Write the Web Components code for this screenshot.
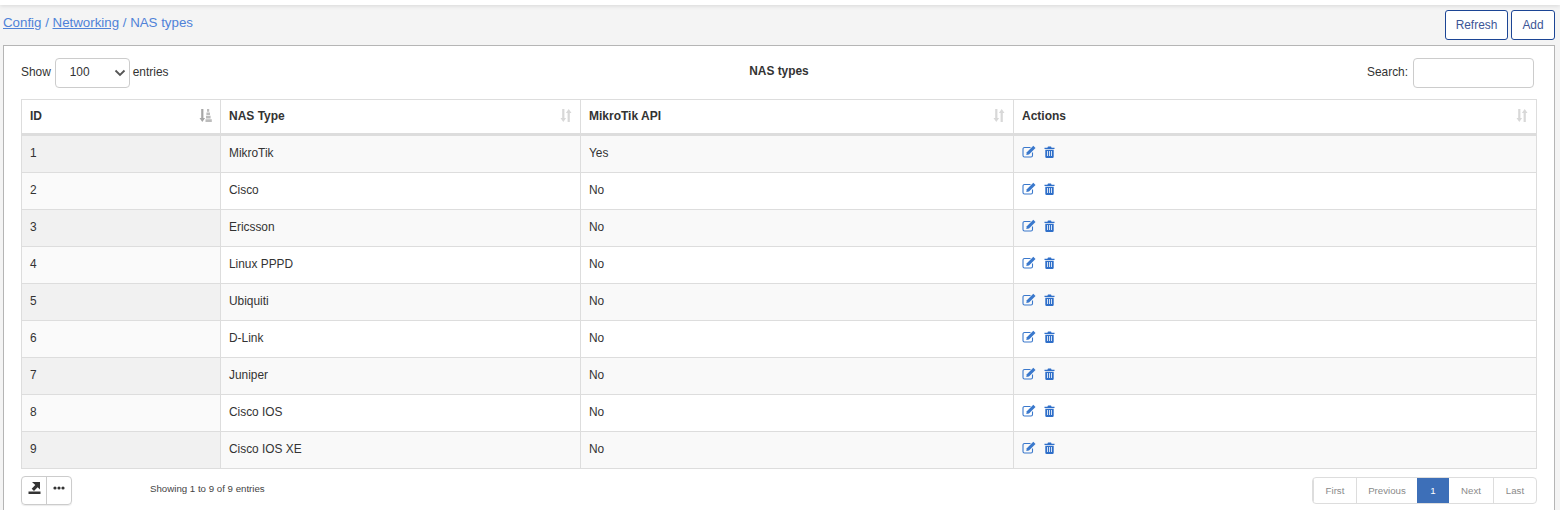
<!DOCTYPE html>
<html>
<head>
<meta charset="utf-8">
<title>NAS types</title>
<style>
  html, body { margin: 0; height: 510px; overflow: hidden; background: #f4f4f4; }
  body { font-family: "Liberation Sans", Arial, sans-serif; font-size: 11.9px; color: #333; }
</style>
</head>
<body>
<page-top>
  <nav-crumbs slot="crumbs"></nav-crumbs>
  <top-button slot="buttons" style="--w: 63px">Refresh</top-button>
  <top-button slot="buttons" style="--w: 44px">Add</top-button>
</page-top>
<nas-panel></nas-panel>

<script>
class PageTop extends HTMLElement {
  connectedCallback() {
    this.attachShadow({ mode: 'open' });
    this.shadowRoot.innerHTML = `
      <style>
        :host { display: block; }
        .strip { height: 5px; background: #fff; box-shadow: 0 1px 4px rgba(0,0,0,.12); }
        .row { display: flex; justify-content: space-between; align-items: flex-start; height: 40px; padding: 5px 5px 0 3px; box-sizing: border-box; }
        .btns { display: flex; gap: 3px; }
      </style>
      <div class="strip"></div>
      <div class="row">
        <slot name="crumbs"></slot>
        <div class="btns"><slot name="buttons"></slot></div>
      </div>
    `;
  }
}

class NavCrumbs extends HTMLElement {
  connectedCallback() {
    this.attachShadow({ mode: 'open' });
    this.shadowRoot.innerHTML = `
      <style>
        :host { display: block; font-size: 13.3px; line-height: 16px; color: #4f82d8; padding-top: 5px; }
        a { color: #4f82d8; text-decoration: underline; }
      </style>
      <a href="#">Config</a> / <a href="#">Networking</a> / NAS types
    `;
  }
}

class TopButton extends HTMLElement {
  connectedCallback() {
    this.attachShadow({ mode: 'open' });
    this.shadowRoot.innerHTML = `
      <style>
        :host { display: block; }
        button { display: block; width: var(--w); height: 30px; padding: 0; font: 11.9px "Liberation Sans", Arial, sans-serif; color: #3c5596; background: #fff; border: 1px solid #1c4595; border-radius: 3px; }
      </style>
      <button><slot></slot></button>
    `;
  }
}

const editIcon = `<svg width="14" height="13" viewBox="0 0 14 13"><path d="M10.500 7.500v3a1.500 1.500 0 0 1-1.500 1.500H2.500A1.500 1.500 0 0 1 1 10.500V4a1.500 1.500 0 0 1 1.500-1.500h6" fill="none" stroke="#3a78cc" stroke-width="1.100"/><path d="M4.800 7.200l6.500-6.500 2.200 2.200L7 9.400l-2.700.5z" fill="#3a78cc"/></svg>`;
const trashIcon = `<svg width="11" height="12" viewBox="0 0 11 12"><path d="M4 0.500h3l.6 1.200H10.500v1.300H.5V1.700h2.900zM1.300 3.700h8.400v7a1.200 1.200 0 0 1-1.200 1.200h-6a1.200 1.200 0 0 1-1.200-1.200z" fill="#2f6fc9"/><path d="M3.500 5v5M5.500 5v5M7.500 5v5" stroke="#fff" stroke-width=".8"/></svg>`;
const sortIcon = `<svg width="12" height="13" viewBox="0 0 12 13"><path d="M2.200 0h2.200v9h1.700L3.300 13 .5 9h1.700zM8.700 0l2.800 4H9.800v9H7.600V4H5.900z" fill="#d8d8d8"/></svg>`;
const sortAscIcon = `<svg width="13" height="13" viewBox="0 0 13 13"><path d="M2.200 0h2.200v9h1.700L3.300 13 .5 9h1.700z" fill="#a6a6a6"/><path d="M8 0h2.200v2.700H8zM7.400 3.400h3.600v2.700H7.400zM7 6.800h4.600v2.700H7zM6.500 10.200h6.300V13H6.500z" fill="#bcbcbc"/></svg>`;

class NasRow extends HTMLElement {
  connectedCallback() {
    const odd = this.getAttribute('n') % 2 == 1;
    this.attachShadow({ mode: 'open' });
    this.shadowRoot.innerHTML = `
      <style>
        :host { display: grid; grid-template-columns: 199px 360px 433px 1fr; height: 37px; box-sizing: border-box; border-bottom: 1px solid #ddd; background: ${odd ? '#f9f9f9' : '#fff'}; }
        div { display: flex; align-items: center; padding: 0 8px; border-left: 1px solid #ddd; line-height: 14px; padding-bottom: 3px; }
        div:last-child { border-right: 1px solid #ddd; gap: 8px; padding-bottom: 5px; }
        .id { background: ${odd ? '#f1f1f1' : '#fafafa'}; }
        svg { display: block; }
      </style>
      <div class="id">${this.getAttribute('n')}</div>
      <div>${this.getAttribute('type')}</div>
      <div>${this.getAttribute('api')}</div>
      <div>${editIcon}${trashIcon}</div>
    `;
  }
}

class NasTable extends HTMLElement {
  connectedCallback() {
    const rows = [
      ['MikroTik', 'Yes'], ['Cisco', 'No'], ['Ericsson', 'No'], ['Linux PPPD', 'No'], ['Ubiquiti', 'No'],
      ['D-Link', 'No'], ['Juniper', 'No'], ['Cisco IOS', 'No'], ['Cisco IOS XE', 'No']
    ];
    this.attachShadow({ mode: 'open' });
    this.shadowRoot.innerHTML = `
      <style>
        :host { display: block; }
        .head { display: grid; grid-template-columns: 199px 360px 433px 1fr; height: 37px; box-sizing: border-box; border-top: 1px solid #ddd; border-bottom: 3px solid #ddd; background: #fff; }
        .head div { display: flex; align-items: center; justify-content: space-between; padding: 0 8px 2px; border-left: 1px solid #ddd; font-weight: bold; font-size: 12px; }
        .head div:last-child { border-right: 1px solid #ddd; }
        svg { display: block; }
      </style>
      <div class="head">
        <div>ID ${sortAscIcon}</div>
        <div>NAS Type ${sortIcon}</div>
        <div>MikroTik API ${sortIcon}</div>
        <div>Actions ${sortIcon}</div>
      </div>
      ${rows.map((r, i) => `<nas-row n="${i + 1}" type="${r[0]}" api="${r[1]}"></nas-row>`).join('')}
    `;
  }
}

class PagerBar extends HTMLElement {
  connectedCallback() {
    this.attachShadow({ mode: 'open' });
    this.shadowRoot.innerHTML = `
      <style>
        :host { display: grid; grid-template-columns: 43px 61px 32px 44px 43px; font-size: 9.7px; color: #8a8a8a; background: #fff; border: 1px solid #ddd; border-radius: 4px; height: 25px; overflow: hidden; }
        span { display: flex; align-items: center; justify-content: center; border-left: 1px solid #ddd; }
        span:first-child { border-left: 0; }
        .on { background: #3d6fb8; color: #fff; border-left: 0; }
        .on + span { border-left: 0; }
      </style>
      <span>First</span><span>Previous</span><span class="on">1</span><span>Next</span><span>Last</span>
    `;
  }
}

class NasPanel extends HTMLElement {
  connectedCallback() {
    this.attachShadow({ mode: 'open' });
    this.shadowRoot.innerHTML = `
      <style>
        :host { display: block; margin: 0 5px 0 3px; height: 480px; box-sizing: border-box; background: #fff; border: 1px solid #b5b5b5; padding: 12px 17px 0 17px; }
        .top { display: grid; grid-template-columns: 1fr auto 1fr; align-items: center; height: 30px; margin-bottom: 11px; }
        .show { display: flex; align-items: center; gap: 3px; }
        .show > span, .search > span, .sel > span { margin-bottom: 2px; }
        .box { box-sizing: border-box; height: 30px; border: 1px solid #ccc; border-radius: 4px; background: #fff; }
        .sel { width: 75px; margin-left: 1px; display: flex; align-items: center; justify-content: space-between; padding: 0 3px 0 14px; }
        .title { font-weight: bold; padding-bottom: 5px; }
        .search { display: flex; justify-content: flex-end; align-items: center; gap: 5px; }
        .search .box { width: 121px; margin-right: 3px; }
        .foot { display: flex; align-items: flex-start; padding-top: 6px; }
        .tools { display: flex; width: 51px; height: 29px; margin-top: 1px; box-sizing: border-box; border: 1px solid #ccc; border-radius: 4px; box-shadow: 0 1px 1px rgba(0,0,0,.08); }
        .tools span { flex: 1; display: flex; align-items: center; justify-content: center; padding-bottom: 5px; }
        .tools span + span { border-left: 1px solid #ccc; }
        .info { margin: 7px 0 0 78px; line-height: 14px; font-size: 9.7px; color: #444; }
        pager-bar { margin: 2px 0 0 auto; }
        svg { display: block; }
      </style>
      <div class="top">
        <div class="show"><span>Show</span><div class="box sel"><span>100</span>
          <svg width="12" height="8" viewBox="0 0 12 8"><path d="M1.500 1.500l4.500 4.500 4.500-4.500" fill="none" stroke="#555" stroke-width="1.800"/></svg></div><span>entries</span></div>
        <div class="title">NAS types</div>
        <div class="search"><span>Search:</span><div class="box"></div></div>
      </div>
      <nas-table></nas-table>
      <div class="foot">
        <div class="tools">
          <span><svg width="13" height="12" viewBox="0 0 13 12"><path d="M4 0h8v7.500L9.600 5.200 6 9 3.700 6.700 7.300 3z" fill="#333"/><path d="M.5 9.500h12V12H.5z" fill="#333"/></svg></span>
          <span><svg width="12" height="4" viewBox="0 0 12 4"><circle cx="2" cy="2" r="1.600" fill="#333"/><circle cx="6" cy="2" r="1.600" fill="#333"/><circle cx="10" cy="2" r="1.600" fill="#333"/></svg></span>
        </div>
        <div class="info">Showing 1 to 9 of 9 entries</div>
        <pager-bar></pager-bar>
      </div>
    `;
  }
}

customElements.define('page-top', PageTop);
customElements.define('nav-crumbs', NavCrumbs);
customElements.define('top-button', TopButton);
customElements.define('nas-row', NasRow);
customElements.define('nas-table', NasTable);
customElements.define('pager-bar', PagerBar);
customElements.define('nas-panel', NasPanel);
</script>
</body>
</html>
